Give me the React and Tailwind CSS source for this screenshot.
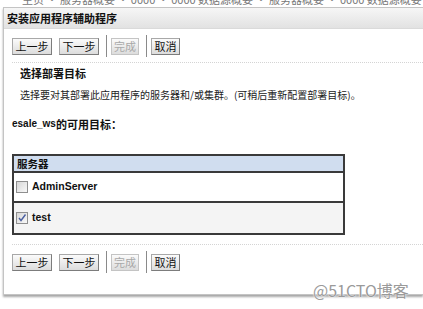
import React from "react";

const cjk = { fontFamily: '"Noto Sans CJK SC", "Liberation Sans", sans-serif' };
const lat = { fontFamily: '"Liberation Sans", Arial, "Noto Sans CJK SC", sans-serif' };

function Btn({ children, w, disabled }) {
  return (
    <div
      className={`flex h-[17px] items-center justify-center border bg-gradient-to-b from-[#fbfbfb] to-[#dcdcdc] text-[11px] leading-none ${disabled ? "text-[#a8a8a8] border-[#c4c4c4]" : "text-[#111] border-[#a8a8a8] border-r-[#7c7c7c] border-b-[#7c7c7c]"}`}
      style={{ ...cjk, width: w }}
    >
      {children}
    </div>
  );
}

function Sep() {
  return <div className="h-[22px] w-px bg-[#8a8a8a]" />;
}

function ButtonRow() {
  return (
    <div className="flex items-center">
      <Btn w={40}>上一步</Btn>
      <div className="w-[7px]" />
      <Btn w={40}>下一步</Btn>
      <div className="w-[7px]" />
      <Sep />
      <div className="w-[4px]" />
      <Btn w={28} disabled>完成</Btn>
      <div className="w-[7px]" />
      <Sep />
      <div className="w-[4px]" />
      <Btn w={29}>取消</Btn>
    </div>
  );
}

function Checkbox({ checked }) {
  return (
    <div className="flex h-[12px] w-[12px] items-center justify-center border border-[#8f8f8f] bg-gradient-to-br from-[#d8d8d8] to-[#f8f8f8]">
      {checked && (
        <svg width="10" height="10" viewBox="0 0 10 10">
          <path d="M2 5 L4 7.5 L8.5 1.5" fill="none" stroke="#4a5fa0" strokeWidth="1.4" />
        </svg>
      )}
    </div>
  );
}

export default function App() {
  return (
    <div className="relative h-[309px] w-[423px] overflow-hidden bg-white">
      <div className="h-[7px] overflow-hidden pl-[22px]">
        <div className="-mt-[7px] whitespace-nowrap text-[11px] leading-[13px] text-[#777]" style={cjk}>
          主页 · 服务器概要 · 0000 · 0000 数据源概要 · 服务器概要 · 0000 数据源概要 · 服务器概要 ·
        </div>
      </div>
      <div className="ml-[3px] h-[288px] border-l border-t border-b border-[#c4c4c4] shadow-[0_2px_2px_rgba(0,0,0,0.35)]">
        <div className="flex h-[21px] items-center border-b border-[#dadada] bg-gradient-to-b from-[#f6f6f6] to-[#e2e2e2] pl-[3px]">
          <span className="text-[11px] font-bold text-[#111]" style={cjk}>安装应用程序辅助程序</span>
        </div>
        <div className="pl-[8px]">
          <div className="pt-[6px]">
            <ButtonRow />
          </div>
          <div className="mt-[5px] border-t border-dotted border-[#d4d4d4]" />
          <div className="pl-[8px] pt-[1px] text-[11px] font-bold leading-[18px] text-[#111]" style={cjk}>选择部署目标</div>
          <div className="pl-[8px] pt-[5px] text-[10px] leading-[16px] text-[#222]" style={cjk}>
            选择要对其部署此应用程序的服务器和/或集群。(可稍后重新配置部署目标)。
          </div>
          <div className="flex items-center pt-[13px] text-[11px] font-bold leading-[16px] text-[#111]">
            <span style={lat} className="text-[10px]">esale_ws</span>
            <span style={cjk}>的可用目标：</span>
          </div>
          <div className="mt-[22px] w-[333px] border-2 border-[#3a3a3a]">
            <div className="flex h-[17px] items-center border-b-2 border-[#3a3a3a] bg-[#d0ddef] pl-[3px]">
              <span className="text-[10.5px] font-bold text-[#111]" style={cjk}>服务器</span>
            </div>
            <div className="flex h-[30px] items-center gap-[4px] border-b-2 border-[#3a3a3a] bg-white pl-[2px]">
              <Checkbox />
              <span className="text-[10.5px] font-bold text-[#111]" style={lat}>AdminServer</span>
            </div>
            <div className="flex h-[30px] items-center gap-[4px] bg-[#f4f4f4] pl-[2px]">
              <Checkbox checked />
              <span className="text-[10.5px] font-bold text-[#111]" style={lat}>test</span>
            </div>
          </div>
          <div className="mt-[9px] border-t border-dotted border-[#d4d4d4]" />
          <div className="pt-[6px]">
            <ButtonRow />
          </div>
        </div>
      </div>
      <div
        className="absolute left-[313px] top-[280px] text-[16px] leading-[20px] text-[#9a9a9a]"
        style={{ ...cjk, textShadow: "0 0 2px #fff, 0 0 1px #fff" }}
      >
        @51CTO博客
      </div>
    </div>
  );
}
